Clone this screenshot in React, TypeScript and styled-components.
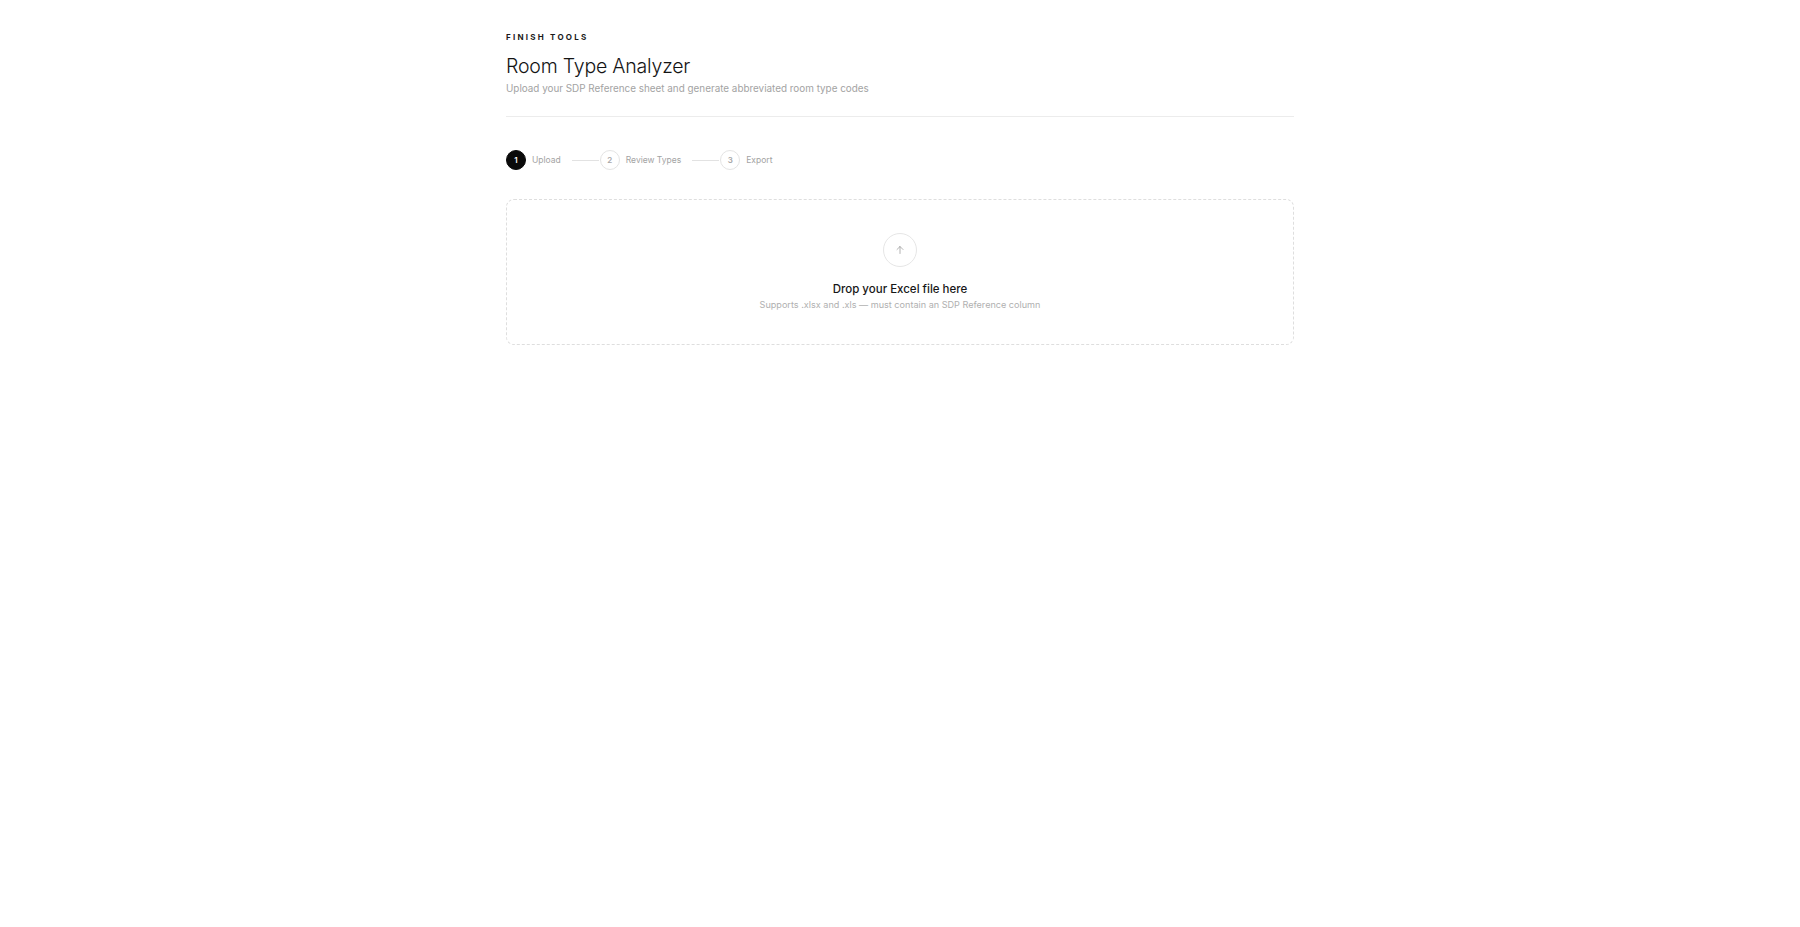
import React from 'react';
import styled, { createGlobalStyle } from 'styled-components';

const GlobalStyle = createGlobalStyle`
  html, body {
    margin: 0;
    padding: 0;
    background: #ffffff;
    font-family: Inter, "Noto Sans", sans-serif;
    -webkit-font-smoothing: antialiased;
  }
  * { box-sizing: border-box; }
`;

const Page = styled.main`
  width: 788px;
  margin: 0 auto;
  padding-top: 32px;
`;

const Header = styled.header`
  padding-bottom: 21px;
  border-bottom: 1px solid #ececec;
`;

const Eyebrow = styled.div`
  font-size: 8px;
  line-height: 10px;
  font-weight: 700;
  letter-spacing: 0.28em;
  color: #1a1a1a;
  text-transform: uppercase;
`;

const Title = styled.h1`
  margin: 12px 0 0;
  font-size: 19.5px;
  line-height: 24px;
  font-weight: 300;
  color: #141414;
  letter-spacing: -0.01em;
`;

const Subtitle = styled.p`
  margin: 3px 0 0;
  font-size: 9.9px;
  line-height: 14px;
  color: #a3a3a3;
`;

const Steps = styled.ol`
  list-style: none;
  margin: 33px 0 0;
  padding: 0;
  display: flex;
  align-items: center;
`;

const Step = styled.li`
  display: flex;
  align-items: center;
  gap: 6px;
`;

const StepDot = styled.span<{ $active?: boolean }>`
  width: 20px;
  height: 20px;
  border-radius: 50%;
  display: flex;
  align-items: center;
  justify-content: center;
  font-size: 8px;
  font-weight: 600;
  color: ${(p) => (p.$active ? '#ffffff' : '#a8a8a8')};
  background: ${(p) => (p.$active ? '#0a0a0a' : '#ffffff')};
  border: 1px solid ${(p) => (p.$active ? '#0a0a0a' : '#e4e4e4')};
`;

const StepLabel = styled.span`
  font-size: 8.5px;
  color: #a3a3a3;
`;

const Connector = styled.li`
  width: 27px;
  height: 1px;
  background: #e2e2e2;
  margin: 0 1px 0 11px;
`;

const DropZone = styled.section`
  margin-top: 29px;
  height: 146px;
  border: 1px dashed #dedede;
  border-radius: 8px;
  display: flex;
  flex-direction: column;
  align-items: center;
  padding-top: 33px;
`;

const UploadCircle = styled.div`
  width: 34px;
  height: 34px;
  border-radius: 50%;
  border: 1px solid #e6e6e6;
  display: flex;
  align-items: center;
  justify-content: center;
  color: #9a9a9a;
`;

const DropTitle = styled.div`
  margin-top: 15px;
  font-size: 11.5px;
  line-height: 14px;
  font-weight: 500;
  color: #171717;
`;

const DropHint = styled.div`
  margin-top: 3px;
  font-size: 9.1px;
  line-height: 12px;
  color: #b0b0b0;
`;

const steps = ['Upload', 'Review Types', 'Export'];

export default function App() {
  return (
    <>
      <GlobalStyle />
      <Page>
        <Header>
          <Eyebrow>Finish Tools</Eyebrow>
          <Title>Room Type Analyzer</Title>
          <Subtitle>Upload your SDP Reference sheet and generate abbreviated room type codes</Subtitle>
        </Header>

        <Steps>
          {steps.map((label, i) => (
            <React.Fragment key={label}>
              {i > 0 && <Connector />}
              <Step>
                <StepDot $active={i === 0}>{i + 1}</StepDot>
                <StepLabel>{label}</StepLabel>
              </Step>
            </React.Fragment>
          ))}
        </Steps>

        <DropZone>
          <UploadCircle>
            <svg width="12" height="12" viewBox="0 0 24 24" fill="none" stroke="currentColor" strokeWidth="1.5" strokeLinecap="round" strokeLinejoin="round">
              <path d="M12 19V5" />
              <path d="M6 11l6-6 6 6" />
            </svg>
          </UploadCircle>
          <DropTitle>Drop your Excel file here</DropTitle>
          <DropHint>Supports .xlsx and .xls — must contain an SDP Reference column</DropHint>
        </DropZone>
      </Page>
    </>
  );
}
